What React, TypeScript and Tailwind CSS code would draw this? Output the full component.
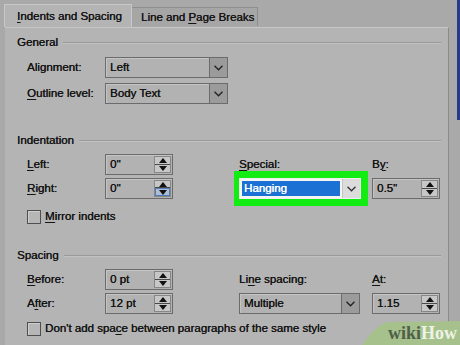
import React from "react";

const FONT = { fontFamily: '"Liberation Sans", Arial, sans-serif' };

function Up() {
  return (
    <svg width="8" height="5" viewBox="0 0 8 5">
      <polygon points="0,5 4,0 8,5" fill="#111" />
    </svg>
  );
}
function Down() {
  return (
    <svg width="8" height="5" viewBox="0 0 8 5">
      <polygon points="0,0 8,0 4,5" fill="#111" />
    </svg>
  );
}
function Chevron({ color = "#222" }: { color?: string }) {
  return (
    <svg width="9" height="6" viewBox="0 0 9 6">
      <polyline points="0.5,0.8 4.5,4.8 8.5,0.8" fill="none" stroke={color} strokeWidth="1.3" />
    </svg>
  );
}

function Spin({ value, hl }: { value: string; hl?: boolean }) {
  return (
    <div className="w-[68px] h-[21px] flex border border-[#6b6b6b] bg-[#b2b2b2] shadow-[inset_1px_1px_0_#c4c4c4]">
      <div className="flex-1 flex items-center pl-[4px] pt-px">{value}</div>
      <div className="w-[17px] flex flex-col my-[1px] mr-[1px] border border-[#868686] bg-[#c7c7c7]">
        <div className="flex-1 flex items-center justify-center border-b border-[#4a4a4a]">
          <Up />
        </div>
        {hl ? (
          <div className="flex-1 flex items-center justify-center bg-[#aebdd2] border border-[#4f7bbd]">
            <Down />
          </div>
        ) : (
          <div className="flex-1 flex items-center justify-center">
            <Down />
          </div>
        )}
      </div>
    </div>
  );
}

function Select({ value, w }: { value: string; w: string }) {
  return (
    <div className={`${w} h-[21px] flex border border-[#6b6b6b] bg-[#b2b2b2] shadow-[inset_1px_1px_0_#c4c4c4]`}>
      <div className="flex-1 flex items-center pl-[4px] pt-px">{value}</div>
      <div className="w-[18px] flex items-center justify-center bg-[#9b9b9b] border-l border-[#6b6b6b]">
        <Chevron />
      </div>
    </div>
  );
}

function Header({ text }: { text: string }) {
  return (
    <div className="h-[14px] flex items-center">
      <span>{text}</span>
      <div className="flex-1 ml-[5px] mr-[7px] h-[2px] border-t border-[#9a9a9a] border-b border-b-[#c2c2c2]" />
    </div>
  );
}

function Check({ children }: { children: React.ReactNode }) {
  return (
    <div className="h-[14px] flex items-center pl-[10px]">
      <div className="w-[14px] h-[14px] border border-[#4e4e4e] bg-[#b6b6b6] shadow-[inset_1px_1px_0_#cfcfcf]" />
      <span className="ml-[4px]">{children}</span>
    </div>
  );
}

function Label({ children, w = "w-[88px]" }: { children: React.ReactNode; w?: string }) {
  return <div className={`${w} h-[21px] flex items-center pl-[10px]`}>{children}</div>;
}

export default function App() {
  return (
    <div
      className="w-[460px] h-[345px] bg-[#a9a9a9] relative overflow-hidden flex text-[11.5px] text-[#141414] [text-shadow:0.35px_0_0_#141414]"
      style={FONT}
    >
      <div className="w-[457px] flex flex-col">
        {/* tabs */}
        <div className="h-[27px] flex items-end pl-[4px]">
          <div className="w-[128px] h-[23px] bg-[#b4b4b4] border-t border-l border-r border-[#c8c8c8] flex items-center pl-[12px] pt-[1px]">
            <span>
              <u className="underline-offset-2">I</u>ndents and Spacing
            </span>
          </div>
          <div className="w-[126px] h-[19px] mb-[1px] bg-[#a6a6a6] border-t border-r border-[#8f8f8f] flex items-center pl-[9px] pt-[1px]">
            <span>
              Line and <u className="underline-offset-2">P</u>age Breaks
            </span>
          </div>
        </div>

        {/* panel */}
        <div className="ml-[5px] w-[444px] flex-1 bg-[#b4b4b4] border-t border-[#c6c6c6] border-r border-r-[#8a8a8a] flex flex-col pl-[12px] pt-[8px]">
          <Header text="General" />
          <div className="mt-[7px] flex">
            <Label>Alignment:</Label>
            <Select value="Left" w="w-[123px]" />
          </div>
          <div className="mt-[5px] flex">
            <Label>
              <span>
                <u className="underline-offset-2">O</u>utline level:
              </span>
            </Label>
            <Select value="Body Text" w="w-[123px]" />
          </div>

          <div className="mt-[30px]">
            <Header text="Indentation" />
          </div>
          <div className="mt-[6px] flex">
            <div className="w-[222px] flex flex-col">
              <div className="flex">
                <Label>
                  <span>
                    <u className="underline-offset-2">L</u>eft:
                  </span>
                </Label>
                <Spin value={'0"'} />
              </div>
              <div className="flex mt-[3px]">
                <Label>
                  <span>
                    <u className="underline-offset-2">R</u>ight:
                  </span>
                </Label>
                <Spin value={'0"'} hl />
              </div>
            </div>
            <div className="w-[133px] flex flex-col">
              <div className="h-[21px] flex items-center">
                <span>
                  <u className="underline-offset-2">S</u>pecial:
                </span>
              </div>
              <div className="mt-[3px] relative w-[122px] h-[21px]">
                <div className="absolute -left-[5px] -right-[7px] -top-[7px] -bottom-[7px] bg-[#12ec12]" />
                <div className="relative w-[122px] h-[21px] flex border border-[#efefef] bg-[#f4f4f4]">
                  <div className="flex-1 m-[2px] bg-[#1c72d4] text-white [text-shadow:0.35px_0_0_#ffffff] flex items-center pl-[2px] pt-px">
                    Hanging
                  </div>
                  <div className="w-[18px] flex items-center justify-center bg-[#dcdcdc] border-l border-[#c4c4c4]">
                    <Chevron color="#333" />
                  </div>
                </div>
              </div>
            </div>
            <div className="flex flex-col">
              <div className="h-[21px] flex items-center">
                <span>
                  B<u className="underline-offset-2">y</u>:
                </span>
              </div>
              <div className="mt-[3px]">
                <Spin value={'0.5"'} />
              </div>
            </div>
          </div>

          <div className="mt-[11px]">
            <Check>
              <u className="underline-offset-2">M</u>irror indents
            </Check>
          </div>

          <div className="mt-[25px]">
            <Header text="Spacing" />
          </div>
          <div className="mt-[6px] flex">
            <div className="w-[222px] flex flex-col">
              <div className="flex">
                <Label>
                  <span>
                    <u className="underline-offset-2">B</u>efore:
                  </span>
                </Label>
                <Spin value="0 pt" />
              </div>
              <div className="flex mt-[3px]">
                <Label>
                  <span>
                    A<u className="underline-offset-2">f</u>ter:
                  </span>
                </Label>
                <Spin value="12 pt" />
              </div>
            </div>
            <div className="w-[133px] flex flex-col">
              <div className="h-[21px] flex items-center">
                <span>
                  Li<u className="underline-offset-2">n</u>e spacing:
                </span>
              </div>
              <div className="mt-[3px]">
                <Select value="Multiple" w="w-[121px]" />
              </div>
            </div>
            <div className="flex flex-col">
              <div className="h-[21px] flex items-center">
                <span>
                  <u className="underline-offset-2">A</u>t:
                </span>
              </div>
              <div className="mt-[3px]">
                <Spin value="1.15" />
              </div>
            </div>
          </div>

          <div className="mt-[8px]">
            <Check>
              Don't add spa<u className="underline-offset-2">c</u>e between paragraphs of the same style
            </Check>
          </div>
        </div>
      </div>

      {/* right window edge */}
      <div className="w-[3px] flex flex-col">
        <div className="h-[120px] bg-[#26398a]" />
      </div>

      {/* wikiHow watermark */}
      <div className="absolute right-0 bottom-0 w-[98px] h-[24px] [text-shadow:none]">
        <svg className="absolute inset-0" width="98" height="24" viewBox="0 0 98 24">
          <path d="M0 24 C8 14 14 4 26 1 L98 0 L98 24 Z" fill="#a6c18c" />
        </svg>
        <div
          className="absolute left-[26px] top-[2px] text-[18px] font-bold leading-[20px]"
          style={{ fontFamily: '"Liberation Serif", "Times New Roman", serif' }}
        >
          <span className="text-[#4f5e49]">wiki</span>
          <span className="text-[#eef3e6]">How</span>
        </div>
      </div>
    </div>
  );
}
